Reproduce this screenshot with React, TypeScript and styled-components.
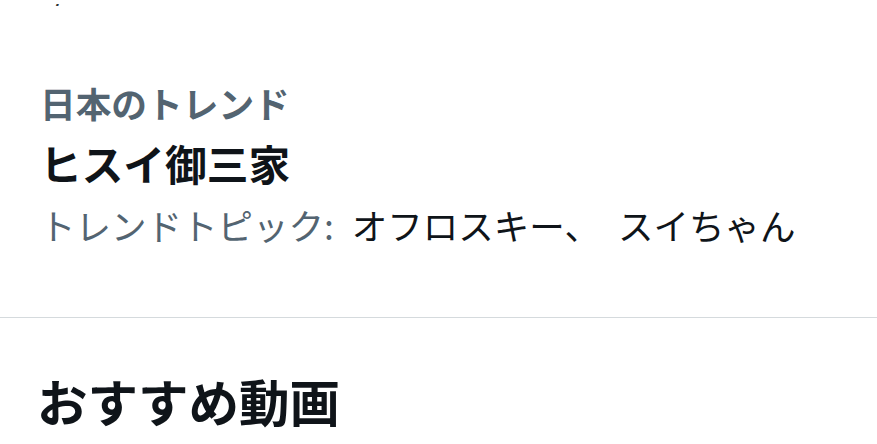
import React from "react";
import styled, { createGlobalStyle } from "styled-components";

const GlobalStyle = createGlobalStyle`
  * {
    margin: 0;
    padding: 0;
    box-sizing: border-box;
  }

  body {
    background: #ffffff;
    font-family: "Noto Sans CJK JP", "Noto Sans", sans-serif;
    color: #0f1419;
  }
`;

const Page = styled.div`
  width: 877px;
  height: 444px;
  overflow: hidden;
  display: flex;
  flex-direction: column;
  background: #ffffff;
`;

// bottom edge of the previous trend, scrolled almost out of view
const PrevTail = styled.div`
  height: 6px;
  overflow: hidden;
  display: flex;
  align-items: flex-end;
  padding-left: 46px;
  font-size: 34px;
  line-height: 44px;
  color: #2f3336;
`;

const PrevText = styled.span`
  display: block;
  margin-bottom: -33px;
`;

const TrendItem = styled.section`
  display: flex;
  flex-direction: column;
  padding: 75px 40px 70px;
`;

const Context = styled.div`
  font-size: 35.7px;
  line-height: 44px;
  font-weight: 700;
  color: #536471;
`;

const Title = styled.div`
  margin-top: 12px;
  font-size: 41.7px;
  line-height: 52px;
  font-weight: 700;
  color: #0f1419;
`;

const Meta = styled.div`
  margin-top: 14px;
  font-size: 35.5px;
  line-height: 44px;
  font-weight: 400;
  word-spacing: 10px;
  color: #0f1419;
  white-space: nowrap;
`;

const MetaLabel = styled.span`
  color: #536471;
`;

const Divider = styled.hr`
  border: none;
  border-top: 1px solid #d5dadd;
`;

const SectionHeading = styled.h2`
  margin-top: 52px;
  padding-left: 37px;
  font-size: 50.5px;
  line-height: 60px;
  font-weight: 700;
  color: #0f1419;
`;

const App = () => {
  return (
    <Page>
      <GlobalStyle />
      <PrevTail>
        <PrevText>/</PrevText>
      </PrevTail>
      <TrendItem>
        <Context>日本のトレンド</Context>
        <Title>ヒスイ御三家</Title>
        <Meta>
          <MetaLabel>トレンドトピック: </MetaLabel>
          オフロスキー、 スイちゃん
        </Meta>
      </TrendItem>
      <Divider />
      <SectionHeading>おすすめ動画</SectionHeading>
    </Page>
  );
};

export default App;
